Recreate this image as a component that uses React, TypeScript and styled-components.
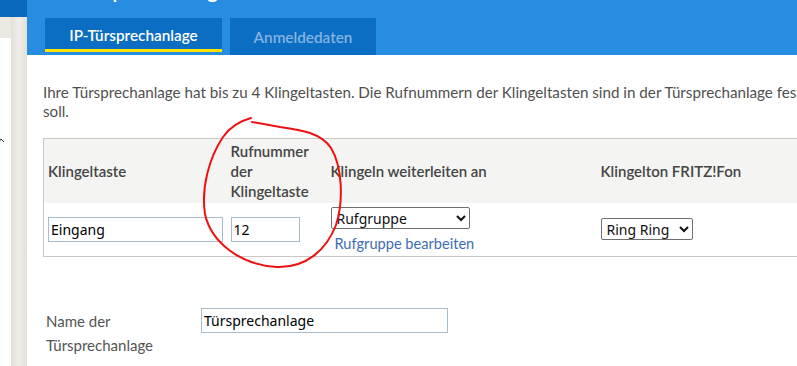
import React from "react";
import styled, { createGlobalStyle } from "styled-components";

const Global = createGlobalStyle`
  html, body { margin: 0; padding: 0; overflow: hidden; background: #fff; }
  body { font-family: Lato, "Open Sans", sans-serif; }
  * { box-sizing: border-box; }
`;

const Page = styled.div`
  position: relative;
  display: flex;
  width: 797px;
  height: 366px;
  overflow: hidden;
`;

const Side = styled.aside`
  width: 27px;
  flex: none;
  display: flex;
  flex-direction: column;
  background: #ece9e3;
`;
const SideTop = styled.div`
  height: 17px;
  background: #0b69bd;
`;
const SideBody = styled.div`
  flex: 1;
  display: flex;
`;
const SidePanel = styled.div`
  width: 11px;
  margin-top: 21px;
  background: #fff;
  padding-top: 90px;
`;
const SideRail = styled.div`
  width: 16px;
  background: linear-gradient(90deg, #e3e0d9, #f0eee9 50%, #e3e0d9);
`;

const Main = styled.main`
  flex: 1;
  min-width: 0;
  display: flex;
  flex-direction: column;
  overflow: hidden;
`;

const Header = styled.header`
  height: 55px;
  flex: none;
  background: #278de0;
  padding-left: 18px;
  display: flex;
  flex-direction: column;
  overflow: hidden;
`;
const Title = styled.h1`
  margin: -21px 0 0;
  font-size: 22px;
  line-height: 22px;
  font-weight: 600;
  color: #fff;
  white-space: nowrap;
`;
const Tabs = styled.nav`
  display: flex;
  gap: 8px;
  margin-top: 17px;
  align-items: flex-start;
`;
const Tab = styled.div<{ $active?: boolean; $w: number }>`
  width: ${(p) => p.$w}px;
  height: ${(p) => (p.$active ? 34 : 37)}px;
  background: #0b6ec2;
  border-bottom: ${(p) => (p.$active ? "3px solid #ffe500" : "none")};
  color: ${(p) => (p.$active ? "#fff" : "#84b3e2")};
  font-size: 15.3px;
  font-weight: 600;
  display: flex;
  align-items: center;
  justify-content: center;
  padding-top: ${(p) => (p.$active ? 2 : 0)}px;
`;

const Content = styled.section`
  padding-left: 16px;
  display: flex;
  flex-direction: column;
`;
const Intro = styled.p`
  margin: 28px 0 0;
  font-size: 15.2px;
  line-height: 19px;
  color: #4f4f4f;
  white-space: nowrap;
`;

const Table = styled.table`
  margin-top: 17px;
  border-collapse: collapse;
  table-layout: fixed;
  width: 800px;
  border: 1px solid #c9c9c1;
`;
const HeadRow = styled.tr`
  background: #f4f4f2;
`;
const Th = styled.th<{ $w?: number }>`
  ${(p) => (p.$w ? `width: ${p.$w}px;` : "")}
  height: 64px;
  padding: 0 4px;
  text-align: left;
  vertical-align: middle;
  font-size: 15px;
  font-weight: 600;
  line-height: 20px;
  color: #454545;
`;
const Td = styled.td`
  height: 54px;
  padding: 0 4px;
  vertical-align: middle;
`;

const TextInput = styled.input<{ $w: number }>`
  display: block;
  width: ${(p) => p.$w}px;
  height: 25px;
  border: 1px solid #a6bccc;
  border-radius: 0;
  padding: 0 2px;
  font-family: "Noto Sans", "Open Sans", sans-serif;
  font-size: 14px;
  color: #000;
  background: #fff;
  outline: none;
`;

const Select = styled.select<{ $w: number }>`
  display: block;
  width: ${(p) => p.$w}px;
  height: 22px;
  border: 1px solid #6f6f6f;
  border-radius: 2px;
  background: #fff;
  color: #111;
  padding: 0 0 0 1px;
  font-family: "Noto Sans", "Open Sans", sans-serif;
  font-size: 14px;
`;

const Stack = styled.div`
  display: flex;
  flex-direction: column;
  gap: 6px;
  padding-top: 1px;
`;
const Link = styled.a`
  font-size: 14.6px;
  line-height: 18px;
  color: #3b6db3;
  text-decoration: none;
  padding-left: 4px;
`;

const FormRow = styled.div`
  display: flex;
  align-items: flex-start;
  margin: 52px 0 0 3px;
`;
const Label = styled.label`
  width: 155px;
  font-size: 15px;
  line-height: 24px;
  color: #545454;
`;
const NameInput = styled(TextInput)`
  margin-top: -1px;
`;

const Overlay = styled.svg`
  position: absolute;
  left: 0;
  top: 0;
  pointer-events: none;
`;

export default function App() {
  return (
    <>
      <Global />
      <Page>
        <Side>
          <SideTop />
          <SideBody>
            <SidePanel>
              <svg width="6" height="6" viewBox="0 0 6 6">
                <path d="M-1 4 L1 1 L4 4" fill="none" stroke="#333" strokeWidth="1" />
              </svg>
            </SidePanel>
            <SideRail />
          </SideBody>
        </Side>
        <Main>
          <Header>
            <Title>IP-Türsprechanlage an LAN/WLAN</Title>
            <Tabs>
              <Tab $active $w={177}>IP-Türsprechanlage</Tab>
              <Tab $w={146}>Anmeldedaten</Tab>
            </Tabs>
          </Header>
          <Content>
            <Intro>
              Ihre Türsprechanlage hat bis zu 4 Klingeltasten. Die Rufnummern der Klingeltasten sind in der Türsprechanlage festgelegt. Legen Sie hier fest, wohin ein Klingeln weitergeleitet werden
              <br />
              soll.
            </Intro>
            <Table>
              <thead>
                <HeadRow>
                  <Th $w={183}>Klingeltaste</Th>
                  <Th $w={100}>Rufnummer der Klingeltaste</Th>
                  <Th $w={270}>Klingeln weiterleiten an</Th>
                  <Th>Klingelton FRITZ!Fon</Th>
                </HeadRow>
              </thead>
              <tbody>
                <tr>
                  <Td>
                    <TextInput $w={175} defaultValue="Eingang" />
                  </Td>
                  <Td>
                    <TextInput $w={69} defaultValue="12" />
                  </Td>
                  <Td>
                    <Stack>
                      <Select $w={139} defaultValue="Rufgruppe">
                        <option>Rufgruppe</option>
                      </Select>
                      <Link href="#">Rufgruppe bearbeiten</Link>
                    </Stack>
                  </Td>
                  <Td>
                    <Select $w={92} defaultValue="Ring Ring">
                      <option>Ring Ring</option>
                    </Select>
                  </Td>
                </tr>
              </tbody>
            </Table>
            <FormRow>
              <Label>
                Name der
                <br />
                Türsprechanlage
              </Label>
              <NameInput $w={247} defaultValue="Türsprechanlage" />
            </FormRow>
          </Content>
        </Main>
        <Overlay width="797" height="366" viewBox="0 0 797 366">
          <path
            d="M251 118 C240 121 230 127 223 137 C209 158 201 188 205 214 C211 242 240 265 277 267 C305 268 326 251 336 225 C344 200 342 166 331 148 C321 133 302 130 280 127 L252 122"
            fill="none"
            stroke="#ee1111"
            strokeWidth="2"
            strokeLinecap="round"
          />
        </Overlay>
      </Page>
    </>
  );
}
